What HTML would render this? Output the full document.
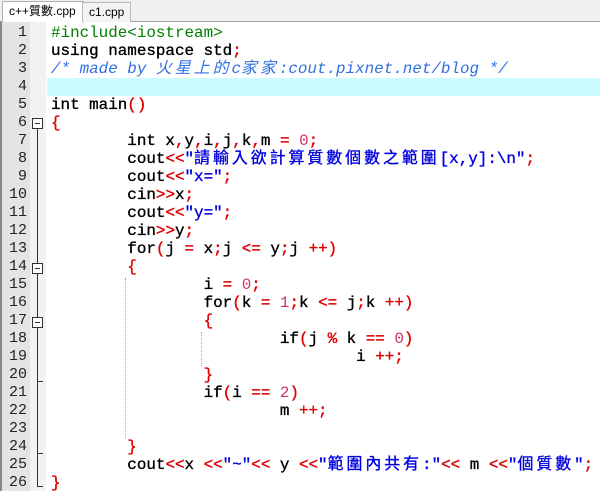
<!DOCTYPE html>
<html><head><meta charset="utf-8"><style>
body{margin:0;width:600px;height:491px;overflow:hidden;background:#fff;position:relative;font-family:"Liberation Mono","Noto Sans CJK TC",monospace;}
.tabs{position:absolute;left:0;top:0;width:600px;height:21px;background:#f0f0f0;border-bottom:1px solid #a0a0a0;}
.tab{position:absolute;top:2px;height:19px;font:12px "Liberation Sans","Noto Sans CJK TC",sans-serif;line-height:19px;padding:0 6px;}
.t1{left:2px;background:#fff;border:1px solid #b0b0b0;border-bottom:none;top:1px;height:21px;width:68px}
.t2{left:82px;background:#f4f4f4;border:1px solid #b8b8b8;border-bottom:none;}
.gut{position:absolute;left:0;top:22px;width:30px;height:469px;background:#e4e4e4;border-left:2px solid #888;}
.fold{position:absolute;left:30px;top:22px;width:16px;height:469px;background:#f2f2f2;}
.ln{position:absolute;left:2px;width:25px;text-align:right;font-size:15px;color:#222;line-height:18px;}
.code{position:absolute;left:51px;font-size:15.9px;font-weight:normal;-webkit-text-stroke:0.35px;line-height:18px;white-space:pre;color:#000;}
.hl{position:absolute;left:47px;width:553px;top:78px;height:18px;background:#ccfcff;}
.s{color:#0000e0}.o{color:#e00000}.n{color:#d03060;-webkit-text-stroke:0}.c{color:#3070e0;font-style:italic;-webkit-text-stroke:0}.p{color:#008000;-webkit-text-stroke:0}
.z{letter-spacing:3px}
.fb{position:absolute;left:32px;width:9px;height:9px;border:1px solid #333;background:#fff;}
.fb:after{content:"";position:absolute;left:2px;top:4px;width:5px;height:1px;background:#333}
.vl{position:absolute;left:37px;width:1px;background:#333}
.hd{position:absolute;left:37px;width:6px;height:1px;background:#333}
.dot{position:absolute;width:0;border-left:1px dotted #aaa}
</style></head><body>
<div class="tabs"><div class="tab t1">c++質數.cpp</div><div class="tab t2">c1.cpp</div></div>
<div class="gut"></div><div class="fold"></div>
<div class="hl"></div>
<div class="vl" style="top:128px;height:358px"></div>
<div class="fb" style="top:118px"></div>
<div class="fb" style="top:263px"></div>
<div class="fb" style="top:317px"></div>
<div class="hd" style="top:381px"></div>
<div class="hd" style="top:453px"></div>
<div class="hd" style="top:486px"></div>
<div class="dot" style="left:125px;top:278px;height:160px"></div>
<div class="dot" style="left:201px;top:332px;height:34px"></div>
<div class="ln" style="top:24px">1<br>2<br>3<br>4<br>5<br>6<br>7<br>8<br>9<br>10<br>11<br>12<br>13<br>14<br>15<br>16<br>17<br>18<br>19<br>20<br>21<br>22<br>23<br>24<br>25<br>26</div>
<div class="code" style="top:24px"><span class="p">#include&lt;iostream&gt;</span>
using namespace std<span class="o">;</span>
<span class="c">/* made by <span class="z">火星上的</span>c<span class="z">家家</span>:cout.pixnet.net/blog */</span>

int main<span class="o">()</span>
<span class="o">{</span>
        int x<span class="o">,</span>y<span class="o">,</span>i<span class="o">,</span>j<span class="o">,</span>k<span class="o">,</span>m <span class="o">=</span> <span class="n">0</span><span class="o">;</span>
        cout<span class="o">&lt;&lt;</span><span class="s">"<span class="z">請輸入欲計算質數個數之範圍</span>[x,y]:\n"</span><span class="o">;</span>
        cout<span class="o">&lt;&lt;</span><span class="s">"x="</span><span class="o">;</span>
        cin<span class="o">&gt;&gt;</span>x<span class="o">;</span>
        cout<span class="o">&lt;&lt;</span><span class="s">"y="</span><span class="o">;</span>
        cin<span class="o">&gt;&gt;</span>y<span class="o">;</span>
        for<span class="o">(</span>j <span class="o">=</span> x<span class="o">;</span>j <span class="o">&lt;=</span> y<span class="o">;</span>j <span class="o">++)</span>
        <span class="o">{</span>
                i <span class="o">=</span> <span class="n">0</span><span class="o">;</span>
                for<span class="o">(</span>k <span class="o">=</span> <span class="n">1</span><span class="o">;</span>k <span class="o">&lt;=</span> j<span class="o">;</span>k <span class="o">++)</span>
                <span class="o">{</span>
                        if<span class="o">(</span>j <span class="o">%</span> k <span class="o">==</span> <span class="n">0</span><span class="o">)</span>
                                i <span class="o">++;</span>
                <span class="o">}</span>
                if<span class="o">(</span>i <span class="o">==</span> <span class="n">2</span><span class="o">)</span>
                        m <span class="o">++;</span>

        <span class="o">}</span>
        cout<span class="o">&lt;&lt;</span>x <span class="o">&lt;&lt;</span><span class="s">"~"</span><span class="o">&lt;&lt;</span> y <span class="o">&lt;&lt;</span><span class="s">"<span class="z">範圍內共有</span>:"</span><span class="o">&lt;&lt;</span> m <span class="o">&lt;&lt;</span><span class="s">"<span class="z">個質數</span>"</span><span class="o">;</span>
<span class="o">}</span></div>
</body></html>
